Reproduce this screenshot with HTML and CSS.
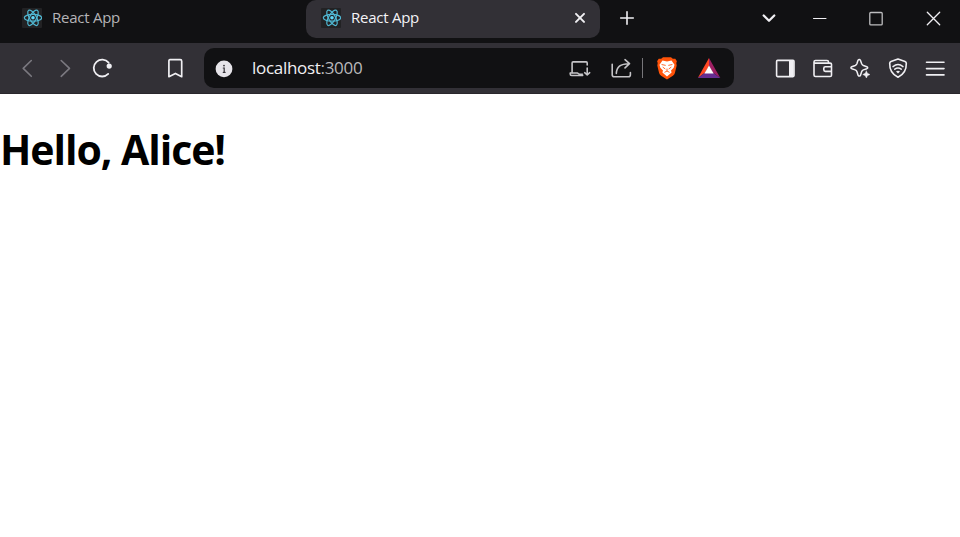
FILE: index.html
```html
<!DOCTYPE html>
<html lang="en">
<head>
<meta charset="utf-8">
<title>React App</title>
<link rel="stylesheet" href="styles.css">
</head>
<body>
<svg class="defs" aria-hidden="true">
  <symbol id="react" viewBox="0 0 20 20">
    <rect width="20" height="20" rx="1" fill="#222224"/>
    <g fill="none" stroke="#50b8d3" stroke-width="1.2">
      <ellipse cx="11" cy="9.800" rx="8.700" ry="3.400"/>
      <ellipse cx="11" cy="9.800" rx="8.700" ry="3.400" transform="rotate(60 11 9.800)"/>
      <ellipse cx="11" cy="9.800" rx="8.700" ry="3.400" transform="rotate(120 11 9.800)"/>
    </g>
    <circle cx="11" cy="9.800" r="1.800" fill="#61dafb"/>
  </symbol>
</svg>
<header class="tabstrip">
  <div class="tab"><svg class="favicon"><use href="#react"/></svg><span class="tab-title">React App</span></div>
  <div class="tab tab-active"><svg class="favicon"><use href="#react"/></svg><span class="tab-title">React App</span>
    <svg class="icon close" viewBox="0 0 24 24"><path d="M8 7.900l8 8M16 7.900l-8 8" stroke-width="2"/></svg></div>
  <svg class="icon add" viewBox="0 0 24 24"><path d="M12 5.700v12.600M5.700 12h12.600" stroke-width="1.600"/></svg>
  <div class="window-controls">
    <svg class="icon chevron" viewBox="0 0 24 24"><path d="M6.700 9.500l5.300 5.200 5.300-5.200" stroke-width="2.300"/></svg>
    <svg class="icon" viewBox="0 0 24 24"><path d="M5.500 12.500h12.500" stroke-width="1"/></svg>
    <svg class="icon" viewBox="0 0 24 24"><rect x="4.800" y="6.500" width="12.400" height="12.400" rx="1" stroke="#bdbdbf" stroke-width="1.300"/></svg>
    <svg class="icon" viewBox="0 0 24 24"><path d="M5.300 6.300l12.400 12.400M17.700 6.300L5.300 18.700" stroke-width="1.300"/></svg>
  </div>
</header>
<nav class="toolbar">
  <div class="nav">
    <svg class="icon dim" viewBox="0 0 24 24"><path d="M15.300 4.500L7.200 12.400l8.100 7.900"/></svg>
    <svg class="icon dim" viewBox="0 0 24 24"><path d="M8.200 4.500l8.300 7.900-8.300 7.900"/></svg>
    <svg class="icon" viewBox="0 0 24 24"><path d="M18.200 17.900A8.400 8.400 0 1 1 18.600 6.700" stroke-width="1.800"/><circle cx="19.200" cy="10.100" r="2.600" fill="#f0eff3" stroke="none"/></svg>
  </div>
  <svg class="icon bookmark" viewBox="0 0 24 24"><path d="M7 3.700h10.200q1.500 0 1.500 1.500v15.500l-6.300-3.300-6.500 3.300V5.200Q5.900 3.700 7 3.700z" stroke-width="1.700"/></svg>
  <div class="address">
    <svg class="icon info" viewBox="0 0 24 24"><circle cx="12" cy="12.900" r="8.400" fill="#e6e4e9" stroke="none"/><path d="M12.200 11.900v4.500M11.300 12h.9M11.300 16.400h1.800" stroke="#343237" stroke-width="1.200"/><circle cx="12" cy="9.600" r=".9" fill="#343237" stroke="none"/></svg>
    <span class="url">localhost<span class="port">:3000</span></span>
    <div class="address-actions">
      <svg class="icon soft" viewBox="0 0 24 24"><path d="M20.200 9V6.900q0-1-1-1H6.100q-1 0-1 1v10.200M3.500 17h7q1 1.200 2.500 1.200h2.500M3.200 17v1q0 1.500 1.500 1.500h11M20.200 12v6.500M17.700 16.700l2.500 2.300 2.500-2.300"/></svg>
      <svg class="icon soft" viewBox="0 0 24 24"><path d="M3.200 8.300v10.500q0 2 2 2h14.200q2 0 2-2v-2.300M7.300 17.400C7.700 10.800 11 7.700 20.500 7.700M16 3.700l4.500 4-4.500 4.200"/></svg>
      <span class="divider"></span>
      <svg class="icon brave" viewBox="0 0 24 24"><path d="M8 1.200h8l1.800 1.600 2.500-.1 1.600 2.600-.6 1.700.4 2.500-1.800 7.500q-.5 1.700-2 2.700L12 23.500l-5.900-3.800q-1.500-1-2-2.700L2.300 9.500l.4-2.500-.6-1.700 1.600-2.600 2.500.1z" fill="#ff5309" stroke="none"/><path d="M7.500 4.500L12 5.500l4.500-1 3 4.200-.8 3-2.700 2.800.6 2L12 20.500l-4.600-4 .6-2-2.700-2.800-.8-3z" fill="#fff" stroke="none"/><path d="M7 8.600l3.300.7M17 8.600l-3.300.7M8 11.300l2 1.500M16 11.300l-2 1.500M9.800 16.200l2.200-1.200 2.200 1.200M12 13v2" stroke="#ff6a2c" stroke-width="1"/></svg>
      <svg class="icon bat" viewBox="0 0 24 24"><path d="M12 2v8L8.200 16.500.800 21.900z" fill="#ff4724" stroke="none"/><path d="M12 2l11.300 19.900-7.500-5.400L12 10z" fill="#9e1f63" stroke="none"/><path d="M.800 21.900l7.400-5.400h7.600l7.500 5.400z" fill="#662d91" stroke="none"/><path d="M12 9.500l4.600 8H7.400z" fill="#fff" stroke="none"/></svg>
    </div>
  </div>
  <div class="tools">
    <svg class="icon" viewBox="0 0 24 24"><rect x="3.600" y="4.400" width="17.400" height="16.200" rx="1"/><path d="M16 4.400h4.700v16.200H16z" fill="#f0eff3" stroke="none"/></svg>
    <svg class="icon" viewBox="0 0 24 24"><path d="M3 6v13q0 1.500 1.500 1.500h14.600q1.400 0 1.400-1.300V8.300q0-1.200-1.400-1.200H4.500Q3 7.100 3 6q0-1.500 1.500-1.500H16q1.500 0 1.500 1.500v1.100M20.500 10.800h-6.200q-1.500 0-1.500 1.500v1.500q0 1.600 1.500 1.600h6.200"/></svg>
    <svg class="icon" viewBox="0 0 24 24"><path d="M10 4.200q1.300-1.400 2.500.2l1.200 3.400q.5 1.200 1.700 1.700l3.400 1.200q1.800 1 0 2l-3.400 1.200q-1.200.5-1.700 1.700l-1.200 3.600q-1.200 1.700-2.400 0l-1.200-3.600q-.5-1.200-1.700-1.700l-3.400-1.200q-1.800-1 0-2l3.400-1.200q1.200-.5 1.700-1.700z" stroke-width="1.500"/><path d="M18.400 15l1 2.300 2.500 1.200-2.500 1.200-1 2.300-1.100-2.300-2.500-1.200 2.500-1.200z" fill="#f0eff3" stroke="#f0eff3" stroke-width=".5"/></svg>
    <svg class="icon" viewBox="0 0 24 24"><path d="M12 3.100l7 2.400q1.300.5 1.300 1.800c.2 6.300-1.900 10.900-8.300 14-6.400-3.100-8.500-7.700-8.300-14q0-1.300 1.300-1.800z"/><path d="M7 10.600q5-4 10 0M8.800 13.200q3.200-2.500 6.400 0" stroke-width="1.500"/><path d="M10 15.400q2-1.500 4 0l-2 2.100z" fill="#f0eff3" stroke="none"/></svg>
    <svg class="icon" viewBox="0 0 24 24"><path d="M3.500 6.300h17.500M3.500 12.600h17.500M3.500 18.900h17.500" stroke-width="1.600"/></svg>
  </div>
</nav>
<main class="page"><h1>Hello, Alice!</h1></main>
</body>
</html>
```
FILE: styles.css
```css
* { box-sizing: border-box; }
body {
  margin: 0;
  height: 537px;
  overflow: hidden;
  background: #fff;
  font-family: "Open Sans", "Noto Sans", sans-serif;
}
.defs { display: none; }
.icon {
  width: 24px;
  height: 24px;
  flex: none;
  fill: none;
  stroke: #f0eff3;
  stroke-width: 1.6;
  stroke-linecap: round;
  stroke-linejoin: round;
}
.tabstrip {
  display: flex;
  height: 43px;
  background: #111113;
}
.tab {
  display: flex;
  align-items: center;
  width: 306px;
  height: 38px;
  padding: 0 8px 2px 22px;
  color: #b5b4b7;
}
.tab-active {
  width: 294px;
  padding-left: 15px;
  color: #f4f3f6;
  background: #323036;
  border-radius: 10px;
}
.favicon { width: 20px; height: 20px; flex: none; }
.tab-title {
  margin: -2px 0 0 10px;
  font-size: 15px;
  line-height: 20px;
  letter-spacing: -0.25px;
  white-space: nowrap;
}
.close { margin-left: auto; }
.add { margin: 6px 0 0 15px; }
.window-controls {
  display: flex;
  gap: 33px;
  margin: 6px 14px 0 auto;
}
.chevron { margin-right: -6px; }
.toolbar {
  display: flex;
  align-items: center;
  height: 51px;
  padding: 0 13px 1px 16px;
  background: #323036;
  border-bottom: 1px solid #29272c;
}
.nav { display: flex; gap: 13px; }
.dim { stroke: #7b7980; }
.soft { stroke: #c5c4c7; }
.bookmark { margin-left: 49px; }
.address {
  display: flex;
  align-items: center;
  width: 530px;
  height: 40px;
  margin-left: 17px;
  padding: 0 13px 0 8px;
  border-radius: 10px;
  background: #111113;
}
.url {
  margin-left: 16px;
  font-size: 17px;
  line-height: 24px;
  letter-spacing: -0.3px;
  color: #f0eff2;
}
.port { color: #b9b8bb; }
.address-actions {
  display: flex;
  align-items: center;
  margin-left: auto;
}
.address-actions .icon + .icon { margin-left: 18px; }
.divider { width: 1px; height: 20px; margin-left: 9px; background: #77767a; }
.address-actions .brave { margin-left: 12px; }
.tools { display: flex; gap: 13.5px; margin-left: auto; }
.page { padding-top: 27px; }
h1 {
  margin: 0;
  font-size: 41px;
  line-height: 56px;
  font-weight: 700;
  letter-spacing: -1.05px;
  color: #000;
}
```
